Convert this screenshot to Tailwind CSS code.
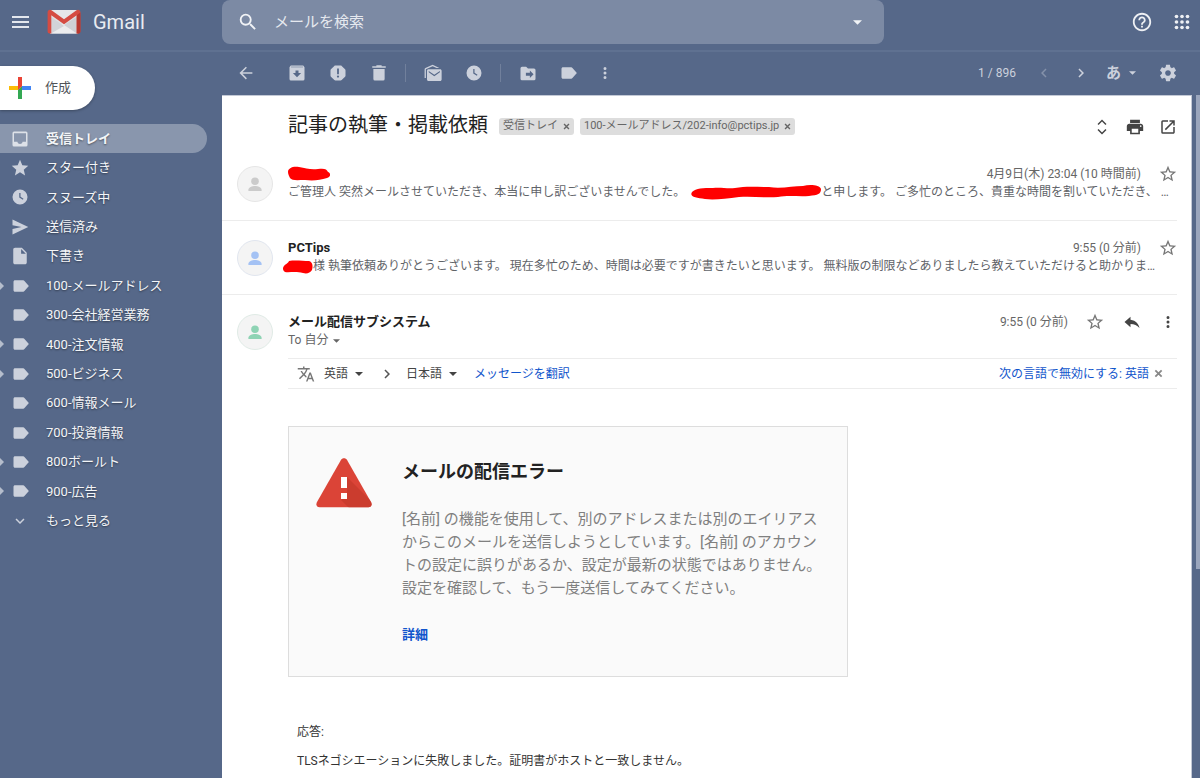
<!DOCTYPE html>
<html lang="ja">
<head>
<meta charset="utf-8">
<meta name="viewport" content="width=device-width, initial-scale=1">
<title>記事の執筆・掲載依頼 - Gmail</title>
<script src="https://cdn.jsdelivr.net/npm/@tailwindcss/browser@4"></script>
</head>
<body class="flex h-screen flex-col overflow-hidden bg-[#566889] font-[Roboto,'Noto_Sans_CJK_JP',sans-serif] text-[#222]">

<svg class="hidden" aria-hidden="true">
  <symbol id="caret" viewBox="0 0 10 5"><path d="M0 0h10L5 5z"/></symbol>
  <symbol id="star-outline" viewBox="1 1 22 22"><path d="M22 9.24l-7.19-.62L12 2 9.19 8.63 2 9.24l5.46 4.73L5.82 21 12 17.27 18.18 21l-1.63-7.03L22 9.24zM12 15.4l-3.76 2.27 1-4.28-3.32-2.88 4.38-.38L12 6.1l1.71 4.04 4.38.38-3.32 2.88 1 4.28L12 15.4z"/></symbol>
  <symbol id="clock" viewBox="0 0 24 24"><path fill-rule="evenodd" d="M12 2a10 10 0 1 0 0 20 10 10 0 0 0 0-20zM11 6.5h1.7v5.3l4 2.4-.9 1.4-4.8-2.9z"/></symbol>
  <symbol id="label" viewBox="0 0 24 24"><path d="M16.6 5.2c-.4-.5-1-.8-1.700-.8H4C2.900 4.400 2 5.300 2 6.400v11.200c0 1.100.9 2 2 2h10.900c.7 0 1.300-.3 1.700-.9L22.500 12z"/></symbol>
  <symbol id="more" viewBox="0 0 24 24"><path d="M12 8a2 2 0 1 0 0-4 2 2 0 0 0 0 4zm0 2a2 2 0 1 0 0 4 2 2 0 0 0 0-4zm0 6a2 2 0 1 0 0 4 2 2 0 0 0 0-4z"/></symbol>
  <symbol id="right" viewBox="0 0 24 24"><path d="M8.600 16.600L13.200 12 8.600 7.400 10 6l6 6-6 6z"/></symbol>
  <symbol id="person" viewBox="0 0 36 36"><circle cx="18" cy="15" r="4"/><path d="M11 25.500v-1.500c0-2.600 4-4 7-4s7 1.400 7 4v1.500z"/></symbol>
  <symbol id="cross" viewBox="0 0 10 10"><path d="M1.500 1.500l7 7m0-7l-7 7" fill="none" stroke="currentColor" stroke-width="2"/></symbol>
</svg>

<header class="flex h-[52px] shrink-0 border-b-2 border-[#5f7191]">
  <div class="flex h-11 w-[222px] shrink-0 items-center pl-[9px]">
    <button aria-label="メインメニュー" class="text-[#e3e7ee]"><svg class="size-[22px] fill-current" viewBox="0 0 22 22"><path d="M3 5h17v2H3zM3 10h17v2H3zM3 15h17v2H3z"/></svg></button>
    <a href="#" class="ml-4 flex items-center gap-3 text-xl text-[#e8ebf1]">
      <svg class="h-[26px] w-[34px]" viewBox="0 0 34 26">
        <path d="M3 1h28v23.500H3z" fill="#dfe0e3"/>
        <path d="M17 14L4 24.500h26z" fill="#ececee"/>
        <path d="M3 7l14 10L4 24.500H3z" fill="#d2d3d8"/>
        <path d="M17 16l14-9v17.500h-1z" fill="#cfd0d5"/>
        <path d="M4 1h26L17 11z" fill="#e6e6e9"/>
        <path d="M3 .8C1.600.8.600 1.800.600 3.200v19.300c0 1.300.8 2 2 2H4.300V6.200L17 15.300 29.700 6.200v18.300h1.700c1.200 0 2-.7 2-2V3.200C33.400 1.800 32.400.8 31 .8c-.6 0-1.100.2-1.500.5L17 10.300 4.500 1.300C4.100 1 3.600.8 3 .8z" fill="#d54b42"/>
        <path d="M29.700 6.200l3.700-2.700v19c0 1.300-.8 2-2 2h-1.700z" fill="#b83830"/>
      </svg>
      <span>Gmail</span>
    </a>
  </div>
  <form role="search" class="flex h-11 w-[662px] min-w-0 items-center rounded-lg bg-[#7c8aa4] px-[15px] text-[#f1f3f6]">
    <button type="button" aria-label="検索"><svg class="size-[22px] fill-current" viewBox="0 0 24 24"><path d="M15.500 14h-.79l-.28-.27A6.471 6.471 0 0 0 16 9.500 6.500 6.500 0 1 0 9.500 16c1.610 0 3.090-.59 4.230-1.570l.27.28v.79l5 4.990L20.490 19l-4.990-5zm-6 0C7.010 14 5 11.990 5 9.500S7.010 5 9.500 5 14 7.010 14 9.500 11.990 14 9.500 14z"/></svg></button>
    <input type="text" aria-label="メールを検索" placeholder="メールを検索" class="ml-[15px] min-w-0 flex-1 bg-transparent text-[15px] outline-none placeholder:text-[#e6e9ef]">
    <button type="button" aria-label="検索オプション" class="flex w-6 justify-center"><svg class="h-[5px] w-[9px] fill-current"><use href="#caret"/></svg></button>
  </form>
  <div class="ml-auto flex h-11 items-center gap-[18px] pr-[7px] text-[#eef0f4]">
    <button aria-label="サポート"><svg class="size-[22px] fill-current" viewBox="0 0 24 24"><path d="M11 18h2v-2h-2v2zm1-16C6.480 2 2 6.480 2 12s4.480 10 10 10 10-4.480 10-10S17.520 2 12 2zm0 18c-4.410 0-8-3.590-8-8s3.590-8 8-8 8 3.590 8 8-3.590 8-8 8zm0-14c-2.210 0-4 1.790-4 4h2c0-1.100.9-2 2-2s2 .9 2 2c0 2-3 1.750-3 5h2c0-2.250 3-2.500 3-5 0-2.210-1.790-4-4-4z"/></svg></button>
    <button aria-label="Google アプリ"><svg class="size-[22px] fill-current" viewBox="0 0 24 24"><g id="dotrow"><circle cx="6" cy="6" r="2"/><circle cx="12" cy="6" r="2"/><circle cx="18" cy="6" r="2"/></g><use href="#dotrow" y="6"/><use href="#dotrow" y="12"/></svg></button>
  </div>
</header>

<div class="flex min-h-0 flex-1">
  <aside class="w-[222px] shrink-0 pt-[14px]">
    <button class="flex h-11 w-[95px] items-center gap-[14px] rounded-r-full rounded-l-[18px] bg-white pl-[9px] text-[13px] text-[#505357] shadow-[0_1px_3px_rgba(0,0,0,0.3)]">
      <svg class="size-[22px]" viewBox="0 0 22 22"><path d="M9 0h4v9l-4 4z" fill="#ea4335"/><path d="M0 9h9v4H0z" fill="#fbbc05"/><path d="M9 13l4-4v13H9z" fill="#34a853"/><path d="M13 9h9v4h-9z" fill="#4285f4"/><path d="M9 9h4l-4 4z" fill="#ea4335"/></svg>
      作成
    </button>
    <nav class="mt-[14px] grid h-[382px] auto-rows-fr pr-[15px] text-[13px] text-[#f3f5f8] [text-shadow:0_1px_2px_rgba(0,0,0,0.45)]">
      <a href="#" aria-current="page" class="flex items-center rounded-r-full bg-[#8996ad] font-bold"><span class="w-[11px]"></span><svg class="mr-[17px] size-[18px] fill-[#dde1e8]" viewBox="0 0 24 24"><path fill-rule="evenodd" d="M4 2h16a2 2 0 0 1 2 2v16a2 2 0 0 1-2 2H4a2 2 0 0 1-2-2V4a2 2 0 0 1 2-2zm0 2.200v11.300h4.500c.5 1.800 1.800 3 3.500 3s3-1.200 3.500-3H20V4.200z"/></svg>受信トレイ</a>
      <a href="#" class="flex items-center"><span class="w-[11px]"></span><svg class="mr-[17px] size-[18px] fill-[#ccd1dc]" viewBox="0 0 24 24"><path d="M12 17.800L18.800 22l-1.800-7.800 6-5.200-7.900-.7L12 1 8.900 8.300 1 9l6 5.200L5.200 22z"/></svg>スター付き</a>
      <a href="#" class="flex items-center"><span class="w-[11px]"></span><svg class="mr-[17px] size-[18px] fill-[#ccd1dc]"><use href="#clock"/></svg>スヌーズ中</a>
      <a href="#" class="flex items-center"><span class="w-[11px]"></span><svg class="mr-[17px] size-[18px] fill-[#ccd1dc]" viewBox="0 0 24 24"><path d="M2 22l21-10L2 2v7.500L14 12 2 14.500z"/></svg>送信済み</a>
      <a href="#" class="flex items-center"><span class="w-[11px]"></span><svg class="mr-[17px] size-[18px] fill-[#ccd1dc]" viewBox="0 0 24 24"><path fill-rule="evenodd" d="M14.500 1H5.500C4 1 3 2 3 3.400v17.200C3 22 4 23 5.500 23h13c1.500 0 2.500-1 2.500-2.400V7.500zM13.500 9V2.700L19.800 9z"/></svg>下書き</a>
      <a href="#" class="flex items-center"><span class="w-3"><svg class="h-2 w-1 fill-[#b5bdcc]" viewBox="0 0 4 8"><path d="M0 0l4 4-4 4z"/></svg></span><svg class="mr-4 size-[18px] fill-[#ccd1dc]"><use href="#label"/></svg>100-メールアドレス</a>
      <a href="#" class="flex items-center"><span class="w-3"></span><svg class="mr-4 size-[18px] fill-[#ccd1dc]"><use href="#label"/></svg>300-会社経営業務</a>
      <a href="#" class="flex items-center"><span class="w-3"><svg class="h-2 w-1 fill-[#b5bdcc]" viewBox="0 0 4 8"><path d="M0 0l4 4-4 4z"/></svg></span><svg class="mr-4 size-[18px] fill-[#ccd1dc]"><use href="#label"/></svg>400-注文情報</a>
      <a href="#" class="flex items-center"><span class="w-3"><svg class="h-2 w-1 fill-[#b5bdcc]" viewBox="0 0 4 8"><path d="M0 0l4 4-4 4z"/></svg></span><svg class="mr-4 size-[18px] fill-[#ccd1dc]"><use href="#label"/></svg>500-ビジネス</a>
      <a href="#" class="flex items-center"><span class="w-3"></span><svg class="mr-4 size-[18px] fill-[#ccd1dc]"><use href="#label"/></svg>600-情報メール</a>
      <a href="#" class="flex items-center"><span class="w-3"></span><svg class="mr-4 size-[18px] fill-[#ccd1dc]"><use href="#label"/></svg>700-投資情報</a>
      <a href="#" class="flex items-center"><span class="w-3"><svg class="h-2 w-1 fill-[#b5bdcc]" viewBox="0 0 4 8"><path d="M0 0l4 4-4 4z"/></svg></span><svg class="mr-4 size-[18px] fill-[#ccd1dc]"><use href="#label"/></svg>800ボールト</a>
      <a href="#" class="flex items-center"><span class="w-3"><svg class="h-2 w-1 fill-[#b5bdcc]" viewBox="0 0 4 8"><path d="M0 0l4 4-4 4z"/></svg></span><svg class="mr-4 size-[18px] fill-[#ccd1dc]"><use href="#label"/></svg>900-広告</a>
    </nav>
    <button class="flex h-[29px] items-center pl-[11px] text-[13px] text-[#f3f5f8] [text-shadow:0_1px_2px_rgba(0,0,0,0.45)]"><svg class="mr-[17px] size-[18px] fill-[#ccd1dc]" viewBox="0 0 24 24"><path d="M16.600 8.600L12 13.200 7.400 8.600 6 10l6 6 6-6z"/></svg>もっと見る</button>
  </aside>

  <main class="flex min-w-0 flex-1 flex-col">
    <div role="toolbar" aria-label="メッセージ操作" class="flex h-[43px] shrink-0 items-center pb-px pl-1 text-[#ccd1dc]">
      <button aria-label="戻る" class="mr-[10px] flex w-10 justify-center"><svg class="size-[18px] fill-current" viewBox="0 0 24 24"><path d="M20.500 11H7.300l5.900-5.900L11.800 3.500 3.300 12l8.500 8.500 1.400-1.500L7.300 13h13.200z"/></svg></button>
      <button aria-label="アーカイブ" class="flex w-[41px] justify-center"><svg class="size-[18px] fill-current" viewBox="0 0 24 24"><path fill-rule="evenodd" d="M4.500 2h15c.6 0 1 .2 1.300.6L22 4.300V20a2 2 0 0 1-2 2H4a2 2 0 0 1-2-2V4.300l1.200-1.700C3.500 2.200 3.900 2 4.500 2zM4 4.200h16v-.7H4zM10 8.500v3.500H6.500l5.500 5.500 5.500-5.500H14V8.500z"/></svg></button>
      <button aria-label="迷惑メールを報告" class="flex w-[41px] justify-center"><svg class="size-[18px] fill-current" viewBox="0 0 24 24"><path fill-rule="evenodd" d="M8.500 2h7c.6 0 1 .2 1.400.6l4.500 4.500c.4.400.6.8.6 1.400v7c0 .6-.2 1-.6 1.400l-4.500 4.500c-.4.400-.8.600-1.400.600h-7c-.6 0-1-.2-1.400-.6l-4.500-4.500c-.4-.4-.6-.8-.6-1.400v-7c0-.6.2-1 .6-1.400l4.500-4.500c.4-.4.8-.6 1.400-.6zM10.800 6v7.500h2.400V6zM12 15.200a1.500 1.500 0 1 0 0 3 1.500 1.500 0 0 0 0-3z"/></svg></button>
      <button aria-label="削除" class="flex w-[41px] justify-center"><svg class="size-[18px] fill-current" viewBox="0 0 24 24"><path d="M15.500 3V1.800h-7V3H3v2h18V3zM4.500 6.500V20a2 2 0 0 0 2 2h11a2 2 0 0 0 2-2V6.500z"/></svg></button>
      <span class="mx-[6px] h-[18px] w-px bg-[#71809c]"></span>
      <button aria-label="未読にする" class="flex w-[41px] justify-center"><svg class="h-[18px] w-5 fill-current" viewBox="0 0 26 24"><path d="M3.500 18.500H1.800V7c0-.8.400-1.400 1.100-1.800L12.500 1l9 4.200h-3.800l-5.200-2.300-9 4z"/><path fill-rule="evenodd" d="M7 7h15.500c1.100 0 2 .9 2 2v11.500c0 1.100-.9 2-2 2H7c-1.100 0-2-.9-2-2V9c0-1.100.9-2 2-2zm.3 2.300v1.600l7.400 5.300 7.500-5.300V9.300l-7.500 5z"/></svg></button>
      <button aria-label="スヌーズ" class="flex w-[41px] justify-center"><svg class="size-[18px] fill-current"><use href="#clock"/></svg></button>
      <span class="mx-[6px] h-[18px] w-px bg-[#71809c]"></span>
      <button aria-label="移動" class="flex w-[41px] justify-center"><svg class="size-[18px] fill-current" viewBox="0 0 24 24"><path fill-rule="evenodd" d="M4 3.500h5.500l2.500 2.500H20a2 2 0 0 1 2 2v11.500a2 2 0 0 1-2 2H4a2 2 0 0 1-2-2v-14a2 2 0 0 1 2-2zM14.500 8.800v3H9.200v3.700h5.300v3l4.900-4.900z"/></svg></button>
      <button aria-label="ラベル" class="flex w-[41px] justify-center"><svg class="size-[18px] fill-current"><use href="#label"/></svg></button>
      <button aria-label="その他" class="flex w-8 justify-center"><svg class="size-[18px] fill-current"><use href="#more"/></svg></button>
      <div class="ml-auto flex items-center pr-3">
        <span class="text-xs">1 / 896</span>
        <button aria-label="前のスレッド" class="ml-2 flex w-10 justify-center text-[#8491aa]"><svg class="size-[18px] fill-current" viewBox="0 0 24 24"><path d="M15.400 7.400L10.800 12l4.600 4.600L14 18l-6-6 6-6z"/></svg></button>
        <button aria-label="次のスレッド" class="flex w-[34px] justify-center"><svg class="size-[18px] fill-current"><use href="#right"/></svg></button>
        <button aria-label="入力ツール" class="mr-1 flex w-[46px] items-center justify-center gap-2 text-[15px] leading-5 font-bold">あ<svg class="h-1 w-[7px] fill-current"><use href="#caret"/></svg></button>
        <button aria-label="設定" class="flex w-10 justify-center"><svg class="size-[18px] fill-current" viewBox="1 1 22 22"><path d="M19.430 12.980c.04-.32.07-.64.07-.98s-.03-.66-.07-.98l2.110-1.650c.19-.15.24-.42.12-.64l-2-3.460c-.12-.22-.39-.3-.61-.22l-2.490 1c-.52-.4-1.080-.73-1.690-.98l-.38-2.650C14.460 2.180 14.250 2 14 2h-4c-.25 0-.46.18-.49.42l-.38 2.650c-.61.25-1.170.59-1.690.98l-2.490-1c-.23-.09-.49 0-.61.22l-2 3.460c-.13.22-.07.49.12.64l2.110 1.650c-.04.32-.07.65-.07.98s.03.66.07.98l-2.110 1.650c-.19.15-.24.42-.12.64l2 3.460c.12.22.39.3.61.22l2.490-1c.52.4 1.080.73 1.690.98l.38 2.650c.03.24.24.42.49.42h4c.25 0 .46-.18.49-.42l.38-2.650c.61-.25 1.170-.59 1.690-.98l2.490 1c.23.09.49 0 .61-.22l2-3.460c.12-.22.07-.49-.12-.64l-2.110-1.650zM12 15.500c-1.930 0-3.500-1.570-3.500-3.500s1.570-3.500 3.500-3.500 3.500 1.570 3.500 3.500-1.570 3.500-3.500 3.500z"/></svg></button>
      </div>
    </div>

    <div class="flex min-h-0 flex-1">
      <article class="min-w-0 flex-1 overflow-hidden border-t border-r border-[#c3c9d6] bg-white pr-[14px]">
        <div class="flex h-[50px] items-center pt-[11px] pl-[66px]">
          <h1 class="pb-[3px] text-xl leading-7 whitespace-nowrap">記事の執筆・掲載依頼</h1>
          <span class="ml-[11px] flex h-[17px] items-center gap-[5px] rounded-[3px] bg-[#ddd] px-1 text-[11px] whitespace-nowrap text-[#666]">受信トレイ<button aria-label="受信トレイを外す"><svg class="size-[7px]"><use href="#cross"/></svg></button></span>
          <span class="ml-[6px] flex h-[17px] items-center gap-[5px] rounded-[3px] bg-[#ddd] px-1 text-[11px] whitespace-nowrap text-[#666]">100-メールアドレス/202-info@pctips.jp<button aria-label="ラベルを外す"><svg class="size-[7px]"><use href="#cross"/></svg></button></span>
          <div class="ml-auto flex gap-[15px] text-[#444]">
            <button aria-label="すべて展開"><svg class="size-[18px] fill-current" viewBox="0 0 24 24"><path d="M12 4.800l4.600 4.600L18 8l-6-6.100L6 8l1.400 1.400zM12 19.200l-4.600-4.600L6 16l6 6.100 6-6.100-1.400-1.400z"/></svg></button>
            <button aria-label="印刷"><svg class="size-[18px] fill-current" viewBox="1 1 22 22"><path d="M19 8H5c-1.660 0-3 1.340-3 3v6h4v4h12v-4h4v-6c0-1.660-1.340-3-3-3zm-3 11H8v-5h8v5zm3-7c-.55 0-1-.45-1-1s.45-1 1-1 1 .45 1 1-.45 1-1 1zM18 3H6v4h12V3z"/></svg></button>
            <button aria-label="新しいウィンドウ"><svg class="size-[18px] fill-current" viewBox="0 0 24 24"><path d="M19 19H5V5h7V3H5a2 2 0 0 0-2 2v14a2 2 0 0 0 2 2h14c1.100 0 2-.9 2-2v-7h-2v7zM14 3v2h3.590l-9.830 9.830 1.410 1.410L19 6.410V10h2V3h-7z"/></svg></button>
          </div>
        </div>

        <section class="flex h-[75px] items-start border-b border-[#ececec] pt-[19px] pl-[15px]">
          <svg class="mt-px size-9 shrink-0 rounded-full border border-[#e6e6e6] bg-[#f4f4f4] fill-[#cbcbcb]"><use href="#person"/></svg>
          <div class="min-w-0 flex-1 pl-[15px]">
            <div class="flex h-[18px] items-center">
              <svg class="h-4 w-[42px] fill-[#f00]" viewBox="0 0 42 16" role="img" aria-label="塗りつぶされた差出人名"><path d="M0 6C0 2 5 0 11 1c7 1 11 3 19 2 6-1 9 0 10 3 3 1 3 5-1 6-7 2-13 3-22 2C10 14 4 15 2 12 1 10 0 8 0 6z"/></svg>
              <time class="ml-auto text-xs text-[#666]">4月9日(木) 23:04 (10 時間前)</time>
              <button aria-label="スター" class="ml-[18px] text-[#777]"><svg class="size-[18px] fill-current"><use href="#star-outline"/></svg></button>
            </div>
            <p class="text-xs leading-[19px] whitespace-nowrap text-[#5f6368]">ご管理人 突然メールさせていただき、本当に申し訳ございませんでした。<svg class="ml-[6px] inline-block h-[15px] w-[130px] fill-[#f00] align-middle" viewBox="0 0 130 15" role="img" aria-label="塗りつぶされた名前"><path d="M1 7C5 3 12 3 22 3c8-1 14 1 22 0 10-2 22-1 34-1 12 2 24-1 34-1 7-2 17-1 18 3 0 5-3 6-12 7-10 1-20-1-31 1-13 1-26-1-39 0C34 14 22 15 14 14 5 13-2 12 1 7z"/></svg>と申します。 ご多忙のところ、貴重な時間を割いていただき、 …</p>
          </div>
        </section>

        <section class="flex h-[74px] items-start border-b border-[#ececec] pt-[18px] pl-[15px]">
          <svg class="mt-px size-9 shrink-0 rounded-full border border-[#e1e6ef] bg-[#f4f4f4] fill-[#a4c2f4]"><use href="#person"/></svg>
          <div class="min-w-0 flex-1 pl-[15px]">
            <div class="flex h-[18px] items-center">
              <h2 class="text-[13px] font-bold">PCTips</h2>
              <time class="ml-auto text-xs text-[#666]">9:55 (0 分前)</time>
              <button aria-label="スター" class="ml-[18px] text-[#777]"><svg class="size-[18px] fill-current"><use href="#star-outline"/></svg></button>
            </div>
            <p class="-ml-[5px] text-xs leading-[19px] whitespace-nowrap text-[#5f6368]"><svg class="inline-block h-[14px] w-[30px] fill-[#f00] align-middle" viewBox="0 0 30 14" role="img" aria-label="塗りつぶされた宛名"><path d="M0 8C1 4 5 4 6 1c6-1 14 0 20 0 4 1 4 6 3 9-2 3-5 4-9 3C12 11 6 13 2 12 0 11 0 9 0 8z"/></svg>様 執筆依頼ありがとうございます。 現在多忙のため、時間は必要ですが書きたいと思います。 無料版の制限などありましたら教えていただけると助かりま…</p>
          </div>
        </section>

        <section>
          <div class="flex h-[63px] items-start pt-[18px] pl-[15px]">
            <svg class="mt-px size-9 shrink-0 rounded-full border border-[#e0ebe6] bg-[#f4f4f4] fill-[#8ed3b4]"><use href="#person"/></svg>
            <div class="min-w-0 flex-1 pl-[15px]">
              <div class="flex h-[18px] items-center">
                <h2 class="text-[13px] font-bold">メール配信サブシステム</h2>
                <time class="ml-auto text-xs text-[#666]">9:55 (0 分前)</time>
                <button aria-label="スター" class="ml-[18px] text-[#777]"><svg class="size-[18px] fill-current"><use href="#star-outline"/></svg></button>
                <button aria-label="返信" class="ml-[19px] text-[#444]"><svg class="size-[18px] fill-current" viewBox="0 0 24 24"><path d="M10 9V5l-8 7 8 7v-4.500c5 0 8.800 1.600 12 5.500-1-5-4.500-10-12-11z"/></svg></button>
                <button aria-label="その他" class="ml-[18px] text-[#444]"><svg class="size-[18px] fill-current"><use href="#more"/></svg></button>
              </div>
              <button class="flex items-center gap-[5px] text-xs leading-[19px] text-[#666]">To 自分<svg class="h-1 w-[7px] fill-current"><use href="#caret"/></svg></button>
            </div>
          </div>

          <div class="ml-[66px] flex h-[31px] items-center border-y border-[#ececec] pl-[9px] text-xs text-[#444]">
            <svg class="size-[18px] fill-[#777]" viewBox="0 0 24 24"><path d="M12.870 15.070l-2.540-2.510.03-.03A17.520 17.520 0 0 0 14.070 6H17V4h-7V2H8v2H1v2h11.170C11.500 7.920 10.440 9.750 9 11.350 8.070 10.320 7.300 9.190 6.690 8h-2c.73 1.630 1.730 3.170 2.980 4.560l-5.090 5.020L4 19l5-5 3.110 3.110.76-2.040zM18.500 10h-2L12 22h2l1.120-3h4.750L21 22h2l-4.500-12zm-2.620 7l1.620-4.330L19.120 17h-3.240z"/></svg>
            <label class="relative ml-[9px] flex items-center"><select aria-label="翻訳元の言語" class="appearance-none bg-transparent pr-[14px] leading-[18px]"><option>英語</option></select><svg class="pointer-events-none absolute right-0 h-1 w-2 fill-current"><use href="#caret"/></svg></label>
            <svg class="ml-[15px] size-[18px] fill-[#555]"><use href="#right"/></svg>
            <label class="relative ml-[10px] flex items-center"><select aria-label="翻訳先の言語" class="appearance-none bg-transparent pr-[14px] leading-[18px]"><option>日本語</option></select><svg class="pointer-events-none absolute right-0 h-1 w-2 fill-current"><use href="#caret"/></svg></label>
            <a href="#" class="ml-[17px] text-[#1155cc]">メッセージを翻訳</a>
            <a href="#" class="ml-auto text-[#1155cc]">次の言語で無効にする: 英語</a>
            <button aria-label="閉じる" class="mr-[14px] ml-[5px] text-[#888]"><svg class="size-[9px]"><use href="#cross"/></svg></button>
          </div>

          <div class="mt-[37px] ml-[66px] flex max-w-[560px] items-start border border-[#ddd] bg-[#fafafa] pt-[31px] pb-[31px] pl-[27px]">
            <svg class="h-[50px] w-14 shrink-0" viewBox="0 0 56 50">
              <defs><clipPath id="tri"><path id="warn" d="M24.800 2.200c1.500-2.600 4.900-2.600 6.400 0L55 44c1.400 2.600.200 5.300-2.600 5.300H3.600C.8 49.300-.4 46.600 1 44z"/></clipPath></defs>
              <use href="#warn" fill="#db4437"/>
              <path clip-path="url(#tri)" d="M31 19l31 31H33l-8-8 6-6z" fill="#c5392c" opacity=".75"/>
              <path d="M25 19h6v11h-6zM25 35h6v6h-6z" fill="#fff"/>
            </svg>
            <div class="ml-[30px] w-[424px]">
              <h3 class="text-lg leading-7 font-bold">メールの配信エラー</h3>
              <p class="mt-[22px] text-[15px] leading-[23px] text-[#808080]">[名前] の機能を使用して、別のアドレスまたは別のエイリアスからこのメールを送信しようとしています。[名前] のアカウントの設定に誤りがあるか、設定が最新の状態ではありません。設定を確認して、もう一度送信してみてください。</p>
              <a href="#" class="mt-[25px] block text-[13px] leading-5 font-bold text-[#1155cc]">詳細</a>
            </div>
          </div>

          <div class="mt-[46px] pl-[75px] text-xs leading-[18px] text-[#333]">
            <p>応答:</p>
            <p class="mt-[11px]">TLSネゴシエーションに失敗しました。証明書がホストと一致しません。</p>
          </div>
        </section>
      </article>
      <div class="flex w-2 justify-end"><div class="h-[474px] w-1 bg-[#9aa5bc]"></div></div>
    </div>
  </main>
</div>
</body>
</html>
